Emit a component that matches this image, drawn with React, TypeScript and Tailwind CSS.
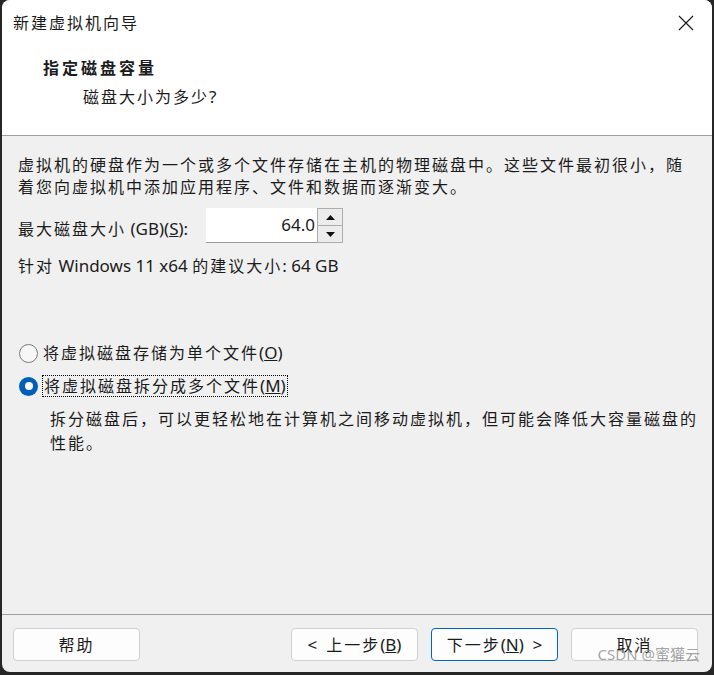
import React from "react";

const font = { fontFamily: '"Noto Sans", "Noto Sans CJK SC", sans-serif' };

function Cn({ children }: { children: React.ReactNode }) {
  return <span className="text-[16px] tracking-[2px]">{children}</span>;
}

function Radio({ checked }: { checked?: boolean }) {
  if (checked) {
    return (
      <span className="flex h-[19px] w-[19px] items-center justify-center rounded-full bg-[#005fb8]">
        <span className="h-[8px] w-[8px] rounded-full bg-white" />
      </span>
    );
  }
  return <span className="h-[19px] w-[19px] rounded-full border-[1.5px] border-[#7a7a7a] bg-[#f7f7f7]" />;
}

function Btn({ children, primary }: { children: React.ReactNode; primary?: boolean }) {
  return (
    <button
      className={`flex h-[33px] w-[127px] items-center justify-center whitespace-pre rounded-[4px] bg-[#fdfdfd] text-[17px] text-[#1b1b1b] ${
        primary ? "border border-[#0067c0]" : "border border-[#d0d0d0]"
      }`}
    >
      {children}
    </button>
  );
}

export default function App() {
  return (
    <div className="h-[675px] w-[714px] bg-[#262626] px-[2px] pb-[3px]" style={font}>
      <div className="relative flex h-full flex-col overflow-hidden rounded-[8px] bg-[#f0f0f0] text-[#1b1b1b]">
        {/* header */}
        <div className="h-[136px] border-b border-[#a0a0a0] bg-white">
          <div className="flex h-[46px] items-center justify-between pl-[11px] pr-[18px]">
            <span className="text-[16px] tracking-[2px]">新建虚拟机向导</span>
            <svg width="16" height="16" viewBox="0 0 16 16">
              <path d="M1 1 L15 15 M15 1 L1 15" stroke="#1b1b1b" strokeWidth="1.2" />
            </svg>
          </div>
          <div className="pl-[41px] pt-[11px] text-[16px] font-bold leading-[22px] tracking-[3px]">指定磁盘容量</div>
          <div className="pl-[81px] pt-[7px] text-[17px] leading-[22px]">
            <Cn>磁盘大小为多少</Cn>?
          </div>
        </div>

        {/* body */}
        <div className="flex flex-1 flex-col whitespace-nowrap px-[16px] pt-[18px] text-[17px]">
          <p className="leading-[22px]">
            <Cn>虚拟机的硬盘作为一个或多个文件存储在主机的物理磁盘中。这些文件最初很小，随</Cn>
            <br />
            <Cn>着您向虚拟机中添加应用程序、文件和数据而逐渐变大。</Cn>
          </p>

          <div className="mt-[10px] flex items-center">
            <span className="w-[188px] pt-[6px]">
              <Cn>最大磁盘大小</Cn> (GB)(<span className="underline">S</span>):
            </span>
            <div className="flex h-[35px] w-[111px] items-center justify-end border-b border-[#9a9a9a] bg-white pr-[2px] text-[17px]">
              64.0
            </div>
            <div className="flex h-[35px] w-[26px] flex-col">
              <div className="flex h-[18px] items-center justify-center border border-[#adadad] bg-[#ececec]">
                <svg width="9" height="5" viewBox="0 0 9 5">
                  <path d="M4.5 0 L9 5 L0 5 Z" fill="#111" />
                </svg>
              </div>
              <div className="flex h-[17px] items-center justify-center border border-t-0 border-[#adadad] bg-[#ececec]">
                <svg width="9" height="5" viewBox="0 0 9 5">
                  <path d="M0 0 L9 0 L4.5 5 Z" fill="#111" />
                </svg>
              </div>
            </div>
          </div>

          <div className="mt-[12px] leading-[22px]">
            <Cn>针对</Cn> Windows 11 x64 <Cn>的建议大小</Cn>: 64 GB
          </div>

          <div className="mt-[65px] flex items-center gap-[5px] pl-[1px]">
            <Radio />
            <span className="leading-[22px]">
              <Cn>将虚拟磁盘存储为单个文件</Cn>(<span className="underline">O</span>)
            </span>
          </div>
          <div className="mt-[11px] flex items-center gap-[4px] pl-[1px]">
            <Radio checked />
            <span className="border border-dotted border-black px-[1px] leading-[20px]">
              <Cn>将虚拟磁盘拆分成多个文件</Cn>(<span className="underline">M</span>)
            </span>
          </div>
          <p className="mt-[10px] pl-[32px] leading-[23px]">
            <Cn>拆分磁盘后，可以更轻松地在计算机之间移动虚拟机，但可能会降低大容量磁盘的</Cn>
            <br />
            <Cn>性能。</Cn>
          </p>
        </div>

        {/* footer */}
        <div className="flex h-[58px] shrink-0 items-start border-t border-[#a0a0a0] pl-[11px] pr-[14px] pt-[13px]">
          <Btn>
            <Cn>帮助</Cn>
          </Btn>
          <div className="flex-1" />
          <div className="flex gap-[13px]">
            <Btn>
              {"<  "}
              <Cn>上一步</Cn>(<span className="underline">B</span>)
            </Btn>
            <Btn primary>
              <Cn>下一步</Cn>(<span className="underline">N</span>)
              {"  >"}
            </Btn>
            <Btn>
              <Cn>取消</Cn>
            </Btn>
          </div>
        </div>

        <span className="pointer-events-none absolute bottom-[7px] right-[12px] text-[15px] text-[#8c8c8c]/80">
          CSDN @蜜獾云
        </span>
      </div>
    </div>
  );
}
